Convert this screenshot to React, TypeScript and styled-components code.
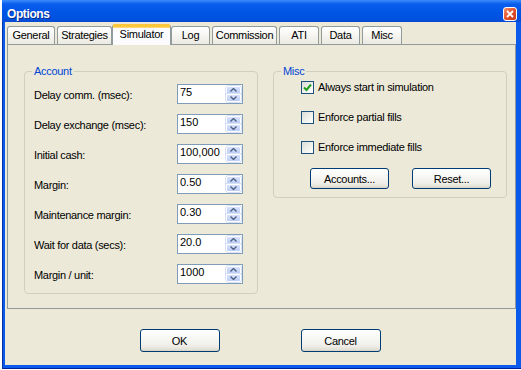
import styled, { createGlobalStyle } from 'styled-components';

const GlobalStyle = createGlobalStyle`
  html, body {
    margin: 0;
    padding: 0;
    background: #ffffff;
  }
  body {
    font-family: 'Liberation Sans', Arial, sans-serif;
    font-size: 11px;
    letter-spacing: -0.3px;
    color: #000;
  }
  * {
    box-sizing: border-box;
  }
`;

const Desktop = styled.div`
  width: 521px;
  height: 370px;
  overflow: hidden;
  padding-left: 2px;
  background: #ffffff;
`;

const Window = styled.div`
  width: 519px;
  height: 369px;
  display: flex;
  flex-direction: column;
  background: #0a5aec;
  box-shadow: inset 1px 0 0 #0831a8, inset 0 -1px 0 #00209a;
`;

const TitleBar = styled.div`
  height: 22px;
  flex: none;
  display: flex;
  align-items: center;
  justify-content: space-between;
  padding: 5px 4px 0 5px;
  background: linear-gradient(
    180deg,
    #3d8dfb 0%,
    #0a5eee 18%,
    #0055e6 55%,
    #0052df 85%,
    #0a4ad0 100%
  );
`;

const Title = styled.span`
  font-size: 12px;
  font-weight: 700;
  letter-spacing: -0.4px;
  color: #ffffff;
  text-shadow: 1px 1px 0 #0a2c8c;
`;

const CloseButton = styled.div`
  width: 14px;
  height: 14px;
  border: 1px solid #ffffff;
  border-radius: 3px;
  background: linear-gradient(135deg, #f0906a 0%, #e0522c 50%, #c8391a 100%);
  display: flex;
  align-items: center;
  justify-content: center;
`;

const Client = styled.div`
  flex: 1;
  margin: 0 5px 4px 3px;
  padding: 1px 0 0 2px;
  background: #ece9d8;
  display: flex;
  flex-direction: column;
`;

const TabStrip = styled.div`
  height: 21px;
  display: flex;
  align-items: flex-end;
  gap: 2px;
  position: relative;
  z-index: 1;
`;

const Tab = styled.div<{ $w: number; $active?: boolean }>`
  width: ${(p) => p.$w}px;
  height: 18px;
  display: flex;
  align-items: center;
  justify-content: center;
  border: 1px solid #919b9c;
  border-bottom: none;
  border-radius: 3px 3px 0 0;
  background: linear-gradient(180deg, #ffffff 0%, #f6f5f1 50%, #ebe9e1 100%);
  padding-bottom: 1px;

  ${(p) =>
    p.$active &&
    `
    width: ${p.$w + 4}px;
    height: 21px;
    margin: 0 -2px -1px;
    padding-bottom: 4px;
    background: #fcfcfe;
    border-top: 3px solid #ffc83c;
    box-shadow: inset 0 1px 0 #ffd978;
  `}
`;

const Panel = styled.div`
  height: 265px;
  flex: none;
  border: 1px solid #919b9c;
  background: #ece9d8;
  padding: 20px 0 0 16px;
  display: flex;
  align-items: flex-start;
  gap: 15px;
`;

const Group = styled.fieldset<{ $pad: string }>`
  width: 234px;
  margin: 0;
  min-width: 0;
  border: 1px solid #d0d0bf;
  border-radius: 4px;
  padding: ${(p) => p.$pad};
`;

const Legend = styled.legend`
  color: #0046d5;
  padding: 0 2px;
  margin-left: -2px;
  line-height: 13px;
`;

const FieldList = styled.div`
  display: flex;
  flex-direction: column;
  gap: 10px;
`;

const FieldRow = styled.div`
  height: 20px;
  display: flex;
  align-items: flex-start;
  justify-content: space-between;
`;

const FieldLabel = styled.span`
  line-height: 13px;
  margin-top: 5px;
`;

const SpinBox = styled.div`
  width: 66px;
  height: 20px;
  border: 1px solid #7f9db9;
  background: #ffffff;
  display: flex;
  padding: 1px 1px 1px 2px;
`;

const SpinValue = styled.span`
  flex: 1;
  line-height: 13px;
  letter-spacing: 0;
`;

const SpinButtons = styled.div`
  width: 15px;
  display: flex;
  flex-direction: column;
`;

const SpinHalf = styled.div<{ $down?: boolean }>`
  flex: 1;
  display: flex;
  align-items: center;
  justify-content: center;
  background: linear-gradient(180deg, #d7e2fb 0%, #bccdf5 100%);
  border: 1px solid #ffffff;
  border-radius: ${(p) => (p.$down ? '0 0 2px 2px' : '2px 2px 0 0')};
  box-shadow: 0 0 0 0.5px #b0c2ec;
`;

const CheckList = styled.div`
  display: flex;
  flex-direction: column;
  gap: 17px;
  padding-left: 18px;
`;

const CheckRow = styled.label`
  height: 13px;
  display: flex;
  align-items: center;
  gap: 4px;
  line-height: 13px;
`;

const CheckBox = styled.span`
  width: 13px;
  height: 13px;
  flex: none;
  border: 1px solid #1c5180;
  background: linear-gradient(135deg, #dcdcd7 0%, #f2f2ee 60%, #ffffff 100%);
  display: flex;
  align-items: center;
  justify-content: center;
`;

const ButtonRow = styled.div`
  display: flex;
  gap: 23px;
  margin-top: 14px;
  padding-left: 27px;
`;

const Button = styled.button<{ $w: number; $h: number }>`
  width: ${(p) => p.$w}px;
  height: ${(p) => p.$h}px;
  padding: 0;
  font: inherit;
  letter-spacing: -0.3px;
  color: #000;
  border: 1px solid #003c74;
  border-radius: 3px;
  background: linear-gradient(
    180deg,
    #ffffff 0%,
    #f7f7f4 40%,
    #efeee8 75%,
    #e3e1d7 92%,
    #d6d0c5 100%
  );
`;

const Footer = styled.div`
  flex: 1;
  display: flex;
  justify-content: center;
  align-items: flex-start;
  gap: 81px;
  padding: 20px 3px 0 0;
`;

const fields = [
  { label: 'Delay comm. (msec):', value: '75' },
  { label: 'Delay exchange (msec):', value: '150' },
  { label: 'Initial cash:', value: '100,000' },
  { label: 'Margin:', value: '0.50' },
  { label: 'Maintenance margin:', value: '0.30' },
  { label: 'Wait for data (secs):', value: '20.0' },
  { label: 'Margin / unit:', value: '1000' }
];

const tabs = [
  { name: 'General', w: 48 },
  { name: 'Strategies', w: 55 },
  { name: 'Simulator', w: 55, active: true },
  { name: 'Log', w: 39 },
  { name: 'Commission', w: 65 },
  { name: 'ATI', w: 40 },
  { name: 'Data', w: 39 },
  { name: 'Misc', w: 40 }
];

const checks = [
  { label: 'Always start in simulation', checked: true },
  { label: 'Enforce partial fills', checked: false },
  { label: 'Enforce immediate fills', checked: false }
];

const Chevron = ({ down }: { down?: boolean }) => (
  <svg width="7" height="4" viewBox="0 0 7 4">
    <path
      d={down ? 'M0.5 0.5 L3.5 3.5 L6.5 0.5' : 'M0.5 3.5 L3.5 0.5 L6.5 3.5'}
      fill="none"
      stroke="#4d6185"
      strokeWidth="1.4"
    />
  </svg>
);

const Spinner = ({ value }: { value: string }) => (
  <SpinBox>
    <SpinValue>{value}</SpinValue>
    <SpinButtons>
      <SpinHalf>
        <Chevron />
      </SpinHalf>
      <SpinHalf $down>
        <Chevron down />
      </SpinHalf>
    </SpinButtons>
  </SpinBox>
);

export default function App() {
  return (
    <Desktop>
      <GlobalStyle />
      <Window>
        <TitleBar>
          <Title>Options</Title>
          <CloseButton>
            <svg width="8" height="8" viewBox="0 0 8 8">
              <path d="M1 1 L7 7 M7 1 L1 7" stroke="#fff" strokeWidth="1.8" />
            </svg>
          </CloseButton>
        </TitleBar>

        <Client>
          <TabStrip>
            {tabs.map((t) => (
              <Tab key={t.name} $w={t.w} $active={t.active}>
                {t.name}
              </Tab>
            ))}
          </TabStrip>

          <Panel>
            <Group $pad="6px 14px 9px 9px">
              <Legend>Account</Legend>
              <FieldList>
                {fields.map((f) => (
                  <FieldRow key={f.label}>
                    <FieldLabel>{f.label}</FieldLabel>
                    <Spinner value={f.value} />
                  </FieldRow>
                ))}
              </FieldList>
            </Group>

            <Group $pad="3px 10px 8px 9px">
              <Legend>Misc</Legend>
              <CheckList>
                {checks.map((c) => (
                  <CheckRow key={c.label}>
                    <CheckBox>
                      {c.checked && (
                        <svg width="9" height="9" viewBox="0 0 9 9">
                          <path
                            d="M1 4.5 L3.5 7 L8 1.5"
                            fill="none"
                            stroke="#21a121"
                            strokeWidth="2"
                          />
                        </svg>
                      )}
                    </CheckBox>
                    {c.label}
                  </CheckRow>
                ))}
              </CheckList>
              <ButtonRow>
                <Button $w={79} $h={21}>Accounts...</Button>
                <Button $w={79} $h={21}>Reset...</Button>
              </ButtonRow>
            </Group>
          </Panel>

          <Footer>
            <Button $w={80} $h={23}>OK</Button>
            <Button $w={80} $h={23}>Cancel</Button>
          </Footer>
        </Client>
      </Window>
    </Desktop>
  );
}
